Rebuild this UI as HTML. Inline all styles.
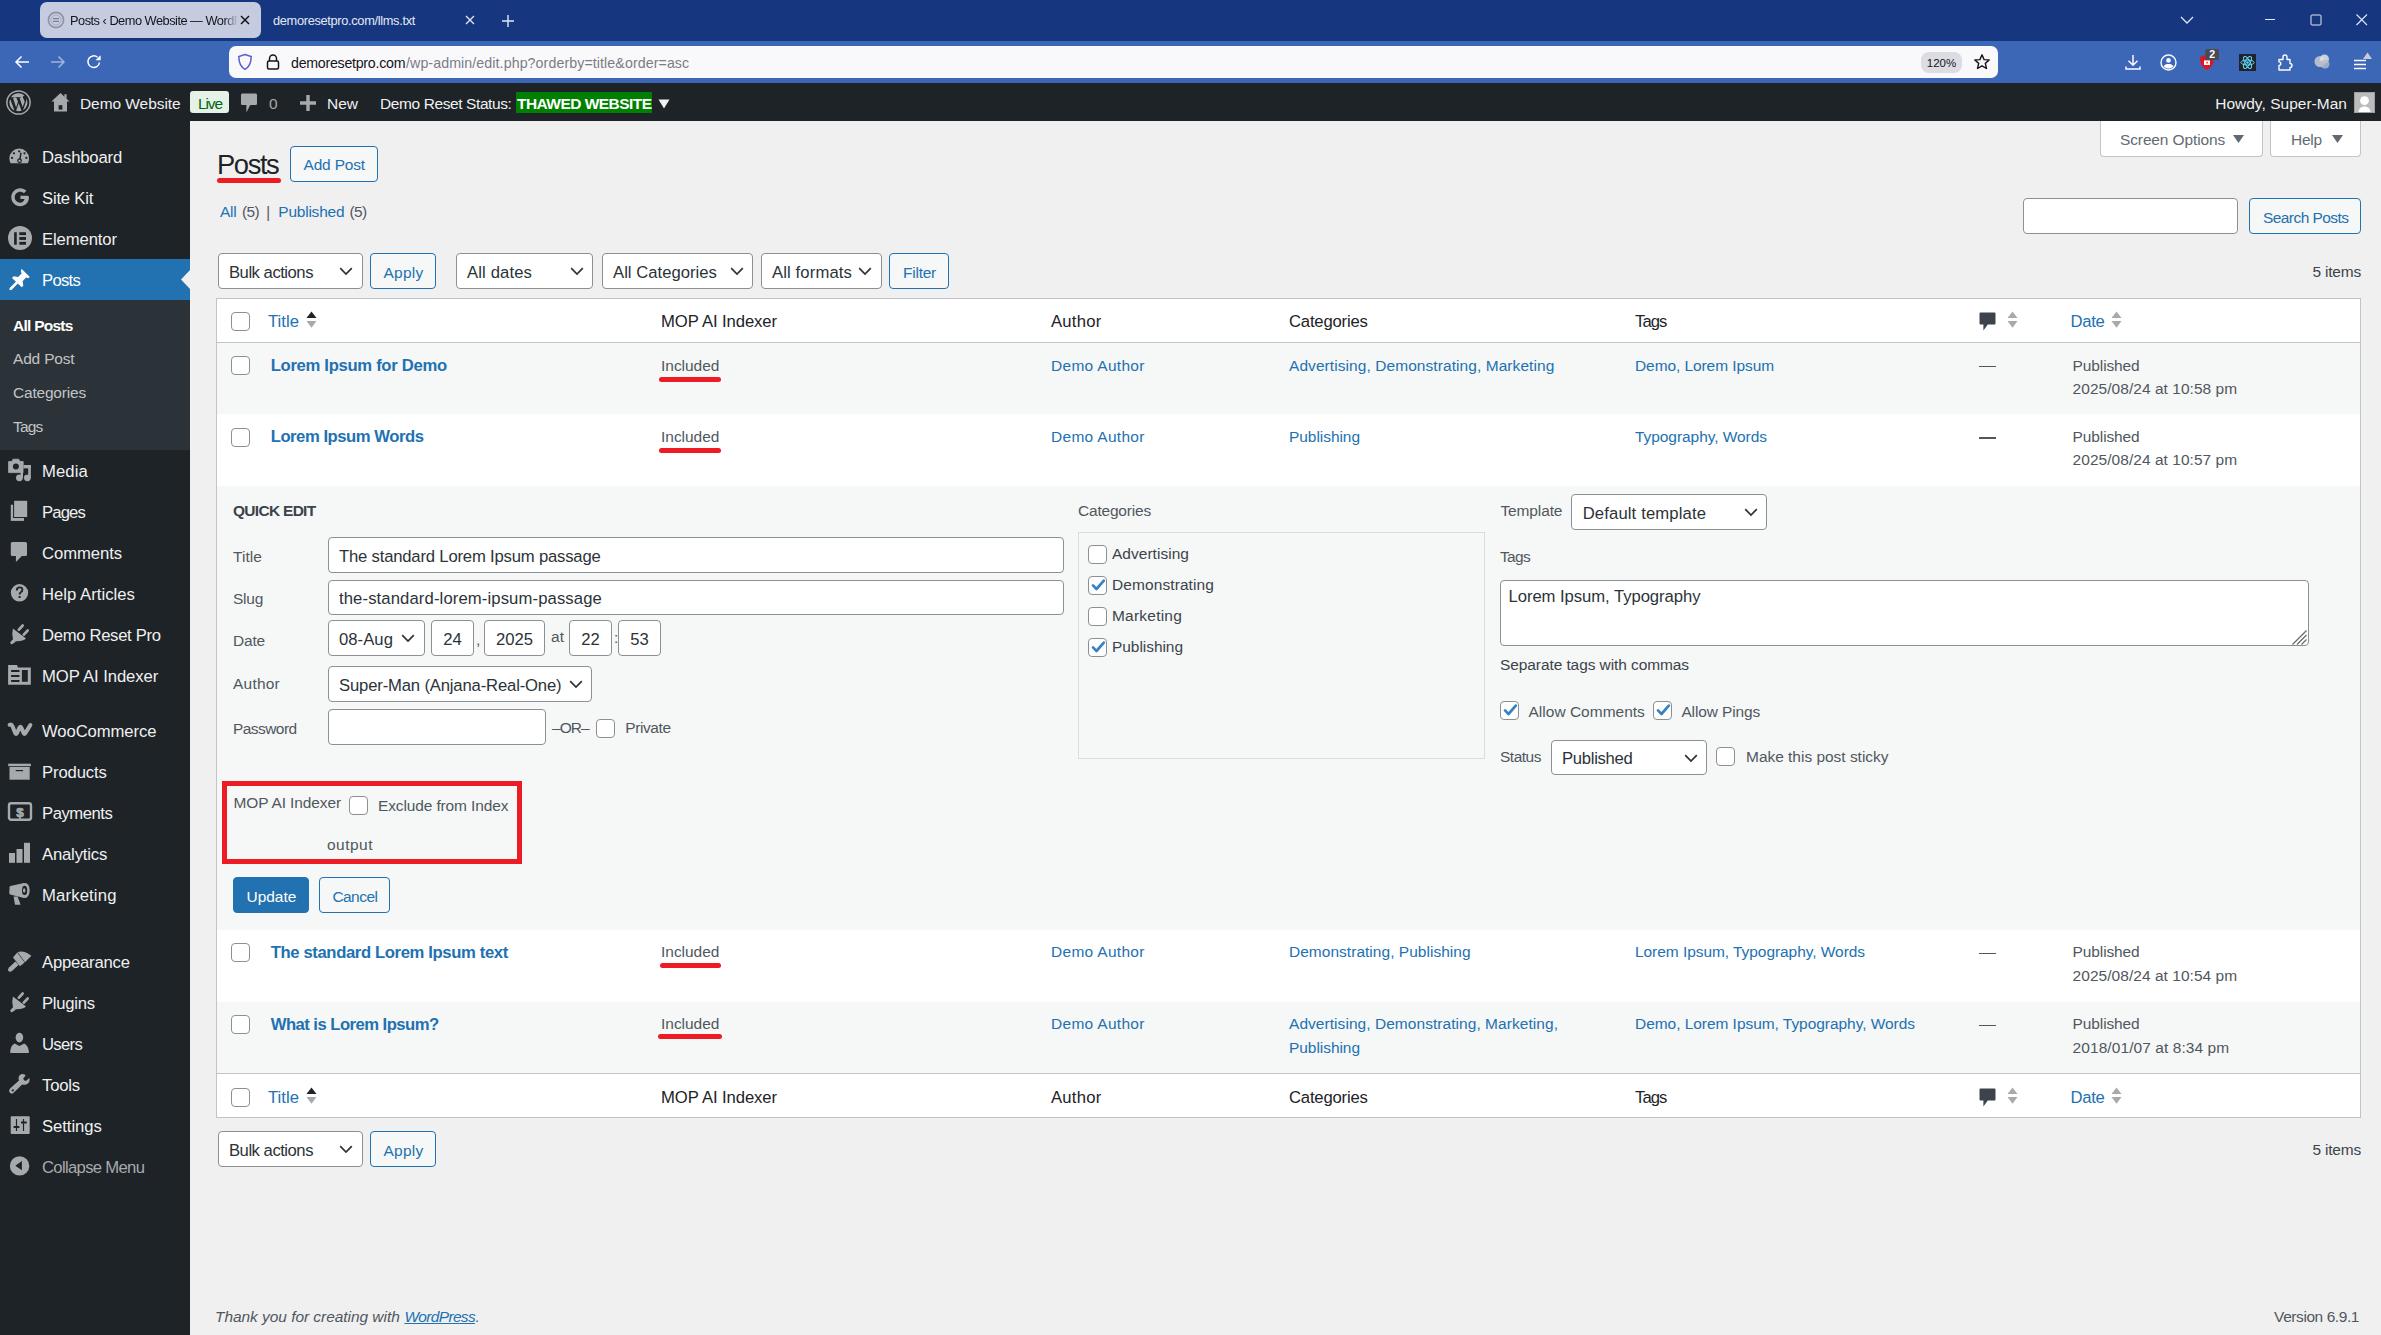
<!DOCTYPE html>
<html><head><meta charset="utf-8"><style>
html,body{margin:0;padding:0;width:2381px;height:1335px;overflow:hidden;background:#f0f0f1;}
body{position:relative;font-family:"Liberation Sans",sans-serif;}
.a{position:absolute;}
.t{position:absolute;white-space:nowrap;}
</style></head><body>
<div class="a" style="left:0px;top:0px;width:2381px;height:41px;background:#16377f"></div>
<div class="a" style="left:0px;top:41px;width:2381px;height:42px;background:#3c67b7"></div>
<div class="a" style="left:40px;top:2px;width:221px;height:36px;background:#c5cce0;border-radius:7px"></div>
<svg class="a" style="left:47px;top:11px;" width="18" height="18" viewBox="0 0 18 18"><circle cx="9" cy="9" r="7.6" fill="none" stroke="#8d93a6" stroke-width="1.6"/><circle cx="9" cy="9" r="5" fill="none" stroke="#a8adbd" stroke-width="1"/><path d="M6 7.6h6M6 10.4h6" stroke="#7a8094" stroke-width="1.4"/></svg>
<div class="t" style="top:12.50px;font-size:12.8px;line-height:16px;color:#15141a;letter-spacing:-0.500px;left:70px;width:168px;overflow:hidden;-webkit-mask-image:linear-gradient(90deg,#000 154px,transparent 168px);">Posts ‹ Demo Website — WordPress</div>
<svg class="a" style="left:240px;top:15px;" width="10" height="10" viewBox="0 0 10 10"><path d="M1 1L9 9M9 1L1 9" stroke="#15141a" stroke-width="1.5"/></svg>
<div class="t" style="top:12.50px;font-size:12.8px;line-height:16px;color:#e3e8f4;letter-spacing:-0.324px;left:273px;">demoresetpro.com/llms.txt</div>
<svg class="a" style="left:465px;top:15px;" width="10" height="10" viewBox="0 0 10 10"><path d="M1 1L9 9M9 1L1 9" stroke="#e3e8f4" stroke-width="1.3"/></svg>
<svg class="a" style="left:501px;top:14px;" width="14" height="14" viewBox="0 0 14 14"><path d="M7 1V13M1 7H13" stroke="#e3e8f4" stroke-width="1.4"/></svg>
<svg class="a" style="left:2180px;top:15px;" width="14" height="10" viewBox="0 0 14 10"><path d="M1 2L7 8L13 2" fill="none" stroke="#e3e8f4" stroke-width="1.3"/></svg>
<svg class="a" style="left:2265px;top:19px;" width="10" height="2" viewBox="0 0 10 2"><path d="M0 .5H10" stroke="#e3e8f4" stroke-width="1"/></svg>
<svg class="a" style="left:2310px;top:14px;" width="12" height="12" viewBox="0 0 12 12"><rect x="1" y="1" width="10" height="10" rx="1" fill="none" stroke="#e3e8f4" stroke-width="1"/></svg>
<svg class="a" style="left:2356px;top:14px;" width="12" height="12" viewBox="0 0 12 12"><path d="M0.5 0.5L11 11M11 0.5L0.5 11" stroke="#e3e8f4" stroke-width="1.1"/></svg>
<svg class="a" style="left:14px;top:55px;" width="16" height="14" viewBox="0 0 16 14"><path d="M15 7H2M7.5 1.5L2 7L7.5 12.5" fill="none" stroke="#fff" stroke-width="1.5"/></svg>
<svg class="a" style="left:50px;top:55px;" width="16" height="14" viewBox="0 0 16 14"><path d="M1 7H14M8.5 1.5L14 7L8.5 12.5" fill="none" stroke="#9fb6e0" stroke-width="1.5"/></svg>
<svg class="a" style="left:86px;top:54px;" width="16" height="16" viewBox="0 0 16 16"><path d="M13.5 8.5A5.8 5.8 0 1 1 11.6 3.3" fill="none" stroke="#fff" stroke-width="1.5"/><path d="M14.6 1.2V6.3H9.5Z" fill="#fff"/></svg>
<div class="a" style="left:229px;top:46px;width:1769px;height:32px;background:#f9f9fb;border-radius:7px"></div>
<svg class="a" style="left:237px;top:53px;" width="16" height="18" viewBox="0 0 16 18"><path d="M8 1.5L14.2 3.6C14.2 10 12 14.2 8 16.4C4 14.2 1.8 10 1.8 3.6Z" fill="none" stroke="#5b5bd6" stroke-width="1.5"/></svg>
<svg class="a" style="left:266px;top:53px;" width="14" height="18" viewBox="0 0 14 18"><path d="M3.5 8V5.5a3.5 3.5 0 0 1 7 0V8" fill="none" stroke="#15141a" stroke-width="1.5"/><rect x="1.5" y="8" width="11" height="8" rx="1.5" fill="none" stroke="#15141a" stroke-width="1.5"/></svg>
<div class="t" style="top:54.00px;font-size:14.2px;line-height:18px;color:#15141a;letter-spacing:-0.255px;left:291px;">demoresetpro.com</div>
<div class="t" style="top:54.00px;font-size:14.2px;line-height:18px;color:#7c7c85;letter-spacing:0.097px;left:406px;">/wp-admin/edit.php?orderby=title&amp;order=asc</div>
<div class="a" style="left:1921px;top:52px;width:41px;height:21px;background:#dcdde3;border-radius:8px"></div>
<div class="t" style="top:55.50px;font-size:11.5px;line-height:15px;color:#15141a;left:1926.79px;">120%</div>
<svg class="a" style="left:1973px;top:53px;" width="18" height="18" viewBox="0 0 18 18"><path d="M9 1.8L11.1 6.6L16.2 7L12.3 10.4L13.5 15.5L9 12.8L4.5 15.5L5.7 10.4L1.8 7L6.9 6.6Z" fill="none" stroke="#15141a" stroke-width="1.4" stroke-linejoin="round"/></svg>
<svg class="a" style="left:2124px;top:53px;" width="18" height="18" viewBox="0 0 18 18"><path d="M9 2V12M4.5 7.8L9 12.3L13.5 7.8M2 13.5V16H16V13.5" fill="none" stroke="#fbfbfe" stroke-width="1.5"/></svg>
<svg class="a" style="left:2160px;top:54px;" width="17" height="17" viewBox="0 0 17 17"><circle cx="8.5" cy="8.5" r="7.5" fill="none" stroke="#fbfbfe" stroke-width="1.4"/><circle cx="8.5" cy="6.4" r="2.3" fill="#fbfbfe"/><path d="M3.6 12.2C4.6 10.6 6.2 10 8.5 10S12.4 10.6 13.4 12.2C12.2 13.8 10.4 14.6 8.5 14.6S4.8 13.8 3.6 12.2Z" fill="#fbfbfe"/></svg>
<svg class="a" style="left:2198px;top:48px;" width="24" height="24" viewBox="0 0 24 24"><path d="M9 6.8L16 9C16 16.4 13.4 19.8 9 21.8C4.6 19.8 2 16.4 2 9Z" fill="#e0141e"/><rect x="6" y="12.4" width="6" height="4.6" fill="#fff"/><rect x="8.4" y="13.8" width="1.4" height="1.6" fill="#e0141e"/><rect x="7.4" y="1" width="13.6" height="11" rx="1.6" fill="#4a4a52"/><text x="14.2" y="10.2" font-family="Liberation Sans" font-size="10.5" font-weight="bold" fill="#fff" text-anchor="middle">2</text></svg>
<svg class="a" style="left:2239px;top:54px;" width="17" height="17" viewBox="0 0 17 17"><rect x="0" y="0" width="17" height="17" fill="#20232a"/><ellipse cx="8.5" cy="8.5" rx="6.6" ry="2.5" fill="none" stroke="#61dafb" stroke-width="1"/><ellipse cx="8.5" cy="8.5" rx="6.6" ry="2.5" fill="none" stroke="#61dafb" stroke-width="1" transform="rotate(60 8.5 8.5)"/><ellipse cx="8.5" cy="8.5" rx="6.6" ry="2.5" fill="none" stroke="#61dafb" stroke-width="1" transform="rotate(-60 8.5 8.5)"/><circle cx="8.5" cy="8.5" r="1.3" fill="#61dafb"/></svg>
<svg class="a" style="left:2277px;top:53px;" width="17" height="18" viewBox="0 0 17 18"><path d="M2 6.5H6V4a2 2 0 0 1 4 0V6.5H13V10.5a2 2 0 0 1 0 4V17H2V12.5a1.8 1.8 0 0 0 0-3.6Z" fill="none" stroke="#fbfbfe" stroke-width="1.4" stroke-linejoin="round"/></svg>
<svg class="a" style="left:2313px;top:53px;" width="19" height="17" viewBox="0 0 19 17"><circle cx="7" cy="8.5" r="5.5" fill="#c9cbd2" opacity=".85"/><circle cx="11.5" cy="6" r="4.5" fill="#e2e3e8" opacity=".85"/><circle cx="12" cy="11" r="4.5" fill="#b9bbc4" opacity=".8"/></svg>
<svg class="a" style="left:2351px;top:51px;" width="22" height="20" viewBox="0 0 22 20"><path d="M3 9.5H15M3 13.5H15M3 17.5H15" stroke="#fbfbfe" stroke-width="1.4"/><path d="M16.5 1.5L21 8H12Z" fill="#c9cbd2"/></svg>
<div class="a" style="left:0px;top:83px;width:2381px;height:38px;background:#1d2327"></div>
<svg class="a" style="left:6px;top:90px;" width="25" height="25" viewBox="0 0 25 25"><circle cx="12.5" cy="12.5" r="11.6" fill="none" stroke="#a7aaad" stroke-width="1.5"/><path d="M3.4 12.5A9.1 9.1 0 0 0 8.5 20.7L4.2 8.9A9 9 0 0 0 3.4 12.5ZM18.6 12A4.8 4.8 0 0 0 17.8 9.5C17.3 8.7 16.9 8 16.9 7.3 16.9 6.4 17.5 5.6 18.5 5.6H18.6A9.1 9.1 0 0 0 4.9 7.3H5.5C6.4 7.3 7.9 7.2 7.9 7.2 8.4 7.1 8.5 7.9 8 7.9 8 7.9 7.5 8 7 8L10.1 17.4 12 11.7 10.6 8C10.2 8 9.7 7.9 9.7 7.9 9.3 7.9 9.3 7.2 9.8 7.2 9.8 7.2 11.2 7.3 12.1 7.3 13 7.3 14.5 7.2 14.5 7.2 15 7.1 15 7.9 14.6 7.9 14.6 7.9 14.1 8 13.6 8L16.7 17.3 17.6 14.4C18 13.2 18.6 12.7 18.6 12ZM12.7 13.3L10.1 20.8A9 9 0 0 0 15.6 20.7L15.5 20.5ZM20.3 8.2A7.4 7.4 0 0 1 20.4 9.3C20.4 10.2 20.2 11.2 19.7 12.5L17 20.3A9.1 9.1 0 0 0 20.3 8.2Z" fill="#a7aaad"/></svg>
<svg class="a" style="left:51px;top:92px;" width="19" height="20" viewBox="0 0 19 20"><path d="M9.5 1L18.6 9.6H16V19.6H3V9.6H.4ZM13.4 2.2H15.6V6.4L13.4 4.4Z" fill="#a7aaad"/><rect x="7.6" y="13.2" width="3.8" height="4.4" fill="#1d2327"/></svg>
<div class="t" style="top:93.50px;font-size:15.47px;line-height:20px;color:#f0f0f1;letter-spacing:-0.048px;left:80px;">Demo Website</div>
<div class="a" style="left:190px;top:91px;width:39px;height:22px;background:#e6f2e8;border-radius:3px"></div>
<div class="t" style="top:93.50px;font-size:15.47px;line-height:20px;color:#00670c;letter-spacing:-1.095px;left:198px;">Live</div>
<svg class="a" style="left:240px;top:92px;" width="18" height="22" viewBox="0 0 18 22"><path d="M2.6 1.4H15.4C16.4 1.4 17 2 17 3V11.4C17 12.4 16.4 13 15.4 13H10.2L6.4 20.6V13H2.6C1.6 13 1 12.4 1 11.4V3C1 2 1.6 1.4 2.6 1.4Z" fill="#a7aaad"/></svg>
<div class="t" style="top:93.50px;font-size:15.47px;line-height:20px;color:#a7aaad;left:269px;">0</div>
<svg class="a" style="left:300px;top:95px;" width="16" height="16" viewBox="0 0 16 16"><path d="M8 0V16M0 8H16" stroke="#a7aaad" stroke-width="3.4"/></svg>
<div class="t" style="top:93.50px;font-size:15.47px;line-height:20px;color:#f0f0f1;letter-spacing:0.017px;left:327px;">New</div>
<div class="t" style="top:93.50px;font-size:15.47px;line-height:20px;color:#f0f0f1;letter-spacing:-0.385px;left:380px;">Demo Reset Status:</div>
<div class="a" style="left:516px;top:92px;width:136px;height:21px;background:#008000"></div>
<div class="t" style="top:93.50px;font-size:15.47px;line-height:20px;color:#fff;font-weight:bold;letter-spacing:-0.522px;left:517px;">THAWED WEBSITE</div>
<svg class="a" style="left:658px;top:99px;" width="12" height="10" viewBox="0 0 12 10"><path d="M0.5 0.5H11.5L6 9.5Z" fill="#f0f0f1"/></svg>
<div class="t" style="top:93.50px;font-size:15.47px;line-height:20px;color:#f0f0f1;letter-spacing:0.033px;left:2215.20px;">Howdy, Super-Man</div>
<div class="a" style="left:2354px;top:92px;width:21px;height:21px;background:#bcbcbc;border:1px solid #a0a0a0;box-sizing:border-box"></div>
<svg class="a" style="left:2355px;top:93px;" width="19" height="19" viewBox="0 0 19 19"><circle cx="9.5" cy="7.6" r="4.4" fill="#fff"/><path d="M3.6 19C3.6 15.6 6 13.4 9.5 13.4S15.4 15.6 15.4 19Z" fill="#fff"/></svg>
<div class="a" style="left:0px;top:121px;width:190px;height:1214px;background:#1d2327"></div>
<div class="a" style="left:0px;top:259px;width:190px;height:41px;background:#2271b1"></div>
<svg class="a" style="left:181px;top:270px;" width="9" height="19" viewBox="0 0 9 19"><path d="M9 0V19L0 9.5Z" fill="#f0f0f1"/></svg>
<div class="a" style="left:0px;top:300px;width:190px;height:150px;background:#2c3338"></div>
<svg class="a" style="left:8.30px;top:144.80px;overflow:visible" width="22.40" height="22.40" viewBox="0 0 20 20"><path d="M10 3.2A8.8 8.8 0 0 0 1.2 12c0 1.5.4 3 1.1 4.3H17.7A8.7 8.7 0 0 0 18.8 12 8.8 8.8 0 0 0 10 3.2Z" fill="#a7aaad"/><circle cx="10" cy="5.6" r="1" fill="#1d2327"/><circle cx="5.3" cy="7.4" r="1" fill="#1d2327"/><circle cx="14.7" cy="7.4" r="1" fill="#1d2327"/><circle cx="3.6" cy="11.6" r="1" fill="#1d2327"/><circle cx="16.4" cy="11.6" r="1" fill="#1d2327"/><path d="M11.6 6.8L10.6 13" stroke="#1d2327" stroke-width="1.3"/><circle cx="10.3" cy="14" r="1.6" fill="none" stroke="#1d2327" stroke-width="1.1"/></svg>
<div class="t" style="top:147.00px;font-size:16.66px;line-height:21px;color:#f0f0f1;letter-spacing:-0.156px;left:42px;">Dashboard</div>
<svg class="a" style="left:9.00px;top:186.00px;overflow:visible" width="22.40" height="22.40" viewBox="0 0 20 20"><path d="M16.6 8.6H10.2V11.6H13.9C13.3 13.6 11.8 14.9 10 14.9 7.3 14.9 5.1 12.7 5.1 10S7.3 5.1 10 5.1C11.3 5.1 12.4 5.6 13.3 6.4L15.5 4.2C14 2.8 12.1 2 10 2 5.6 2 2 5.6 2 10S5.6 18 10 18C14.4 18 17.8 14.8 17.8 10 17.8 9.5 17.7 9 16.6 8.6Z" fill="#a7aaad"/></svg>
<div class="t" style="top:188.00px;font-size:16.66px;line-height:21px;color:#f0f0f1;letter-spacing:-0.198px;left:42px;">Site Kit</div>
<svg class="a" style="left:8.00px;top:225.80px;overflow:visible" width="24.00" height="24.00" viewBox="0 0 20 20"><circle cx="10" cy="10" r="10" fill="#a7aaad"/><rect x="5.1" y="5.2" width="2.2" height="10.4" fill="#1d2327"/><rect x="9.4" y="5.2" width="5.6" height="2.4" fill="#1d2327"/><rect x="9.4" y="9.2" width="5.6" height="2.4" fill="#1d2327"/><rect x="9.4" y="13.2" width="5.6" height="2.4" fill="#1d2327"/></svg>
<div class="t" style="top:229.00px;font-size:16.66px;line-height:21px;color:#f0f0f1;letter-spacing:-0.115px;left:42px;">Elementor</div>
<svg class="a" style="left:7.70px;top:266.70px;overflow:visible" width="23.60" height="23.60" viewBox="0 0 20 20"><path d="M11.5 1.5L18.5 8.5 17 9.6 15.3 9 12.4 12 13 15.8 11.6 17.2 8.3 13.9 3 19.4 1.2 19.6 1.4 17.8 6.7 12.6 3.4 9.3 4.8 7.9 8.6 8.5 11.5 5.5 10.9 3.6Z" fill="#fff"/></svg>
<div class="t" style="top:270.00px;font-size:16.66px;line-height:21px;color:#fff;letter-spacing:-0.693px;left:42px;">Posts</div>
<div class="t" style="top:461.00px;font-size:16.66px;line-height:21px;color:#f0f0f1;letter-spacing:0.085px;left:42px;">Media</div>
<div class="t" style="top:502.00px;font-size:16.66px;line-height:21px;color:#f0f0f1;letter-spacing:-0.848px;left:42px;">Pages</div>
<div class="t" style="top:543.00px;font-size:16.66px;line-height:21px;color:#f0f0f1;letter-spacing:-0.068px;left:42px;">Comments</div>
<div class="t" style="top:584.00px;font-size:16.66px;line-height:21px;color:#f0f0f1;letter-spacing:0.031px;left:42px;">Help Articles</div>
<div class="t" style="top:625.00px;font-size:16.66px;line-height:21px;color:#f0f0f1;letter-spacing:-0.318px;left:42px;">Demo Reset Pro</div>
<div class="t" style="top:666.00px;font-size:16.66px;line-height:21px;color:#f0f0f1;letter-spacing:-0.078px;left:42px;">MOP AI Indexer</div>
<div class="t" style="top:721.00px;font-size:16.66px;line-height:21px;color:#f0f0f1;letter-spacing:-0.093px;left:42px;">WooCommerce</div>
<div class="t" style="top:762.00px;font-size:16.66px;line-height:21px;color:#f0f0f1;letter-spacing:-0.118px;left:42px;">Products</div>
<div class="t" style="top:803.00px;font-size:16.66px;line-height:21px;color:#f0f0f1;letter-spacing:-0.460px;left:42px;">Payments</div>
<div class="t" style="top:844.00px;font-size:16.66px;line-height:21px;color:#f0f0f1;letter-spacing:-0.174px;left:42px;">Analytics</div>
<div class="t" style="top:885.00px;font-size:16.66px;line-height:21px;color:#f0f0f1;letter-spacing:0.161px;left:42px;">Marketing</div>
<div class="t" style="top:952.00px;font-size:16.66px;line-height:21px;color:#f0f0f1;letter-spacing:-0.215px;left:42px;">Appearance</div>
<div class="t" style="top:993.00px;font-size:16.66px;line-height:21px;color:#f0f0f1;letter-spacing:-0.249px;left:42px;">Plugins</div>
<div class="t" style="top:1034.00px;font-size:16.66px;line-height:21px;color:#f0f0f1;letter-spacing:-0.681px;left:42px;">Users</div>
<div class="t" style="top:1075.00px;font-size:16.66px;line-height:21px;color:#f0f0f1;letter-spacing:-0.199px;left:42px;">Tools</div>
<div class="t" style="top:1116.00px;font-size:16.66px;line-height:21px;color:#f0f0f1;letter-spacing:-0.062px;left:42px;">Settings</div>
<svg class="a" style="left:0;top:0" width="40" height="1200" viewBox="0 0 40 1200"><path d="M8.6 461.5H12L13 459.2H18.8L19.8 461.5H23.2V472.6H8.6Z" fill="#a7aaad" stroke="#a7aaad" stroke-width=".8" stroke-linejoin="round"/><circle cx="15.9" cy="466.4" r="3" fill="#1d2327"/><circle cx="19.4" cy="477.8" r="3.4" fill="#a7aaad"/><circle cx="27.4" cy="477.8" r="3.4" fill="#a7aaad"/><rect x="20.6" y="468" width="2.4" height="10" fill="#a7aaad"/><rect x="28.2" y="465" width="2.6" height="12.8" fill="#a7aaad"/><rect x="23.6" y="465" width="7.2" height="3.6" fill="#a7aaad"/><rect x="23.7" y="468.6" width="4.2" height="6" fill="#1d2327"/><rect x="10.8" y="504.7" width="13.2" height="16.2" fill="#a7aaad"/><rect x="13.1" y="499.8" width="15.1" height="18.2" fill="#1d2327"/><rect x="14.1" y="500.8" width="13.1" height="16.2" fill="#a7aaad"/><path d="M12.3 541.9H25.5Q27 541.9 27 543.4V554.5Q27 556 25.5 556H21.9L15.9 562V556H12.3Q10.8 556 10.8 554.5V543.4Q10.8 541.9 12.3 541.9Z" fill="#a7aaad"/><circle cx="19.5" cy="592.8" r="8.7" fill="#a7aaad"/><path d="M16.8 590.4Q16.8 587.4 19.6 587.4Q22.4 587.4 22.4 589.8Q22.4 591.4 20.8 592.2Q19.6 592.9 19.6 594.6" fill="none" stroke="#1d2327" stroke-width="1.9"/><rect x="18.6" y="596" width="2" height="2" fill="#1d2327"/><g transform="translate(0 0)"><path d="M12.9 628.4L26 638.6Q22.6 641.6 16 641.2L12.6 644Q10.6 644.6 10.2 642.8Q10.2 642 13 639.2Q11.6 633.4 12.9 628.4Z" fill="#a7aaad"/><path d="M18.9 629.6L22.6 625.6M23.8 634.6L27.6 630.6" stroke="#a7aaad" stroke-width="2.8" stroke-linecap="round"/></g><g transform="translate(0 368)"><path d="M12.9 628.4L26 638.6Q22.6 641.6 16 641.2L12.6 644Q10.6 644.6 10.2 642.8Q10.2 642 13 639.2Q11.6 633.4 12.9 628.4Z" fill="#a7aaad"/><path d="M18.9 629.6L22.6 625.6M23.8 634.6L27.6 630.6" stroke="#a7aaad" stroke-width="2.8" stroke-linecap="round"/></g><path d="M8.1 665H17L18 667.6H30.8V684.8H8.1Z" fill="#a7aaad"/><rect x="11.1" y="670" width="8.4" height="2" fill="#1d2327"/><rect x="11.1" y="675" width="8.4" height="2" fill="#1d2327"/><rect x="11.1" y="680" width="8.4" height="2" fill="#1d2327"/><rect x="21.9" y="670" width="5.9" height="11.8" fill="#1d2327"/><path d="M9.6 724.8Q11.6 724 12.6 726.4L15.4 733.4Q16 734.6 16.8 733.4L19.6 727.4Q20.4 726 21.2 727.4L23.8 733.4Q24.4 734.6 25.2 733.4L30.4 725" fill="none" stroke="#a7aaad" stroke-width="4" stroke-linecap="round" stroke-linejoin="round"/><rect x="8.2" y="763.7" width="22.7" height="2.5" fill="#a7aaad"/><rect x="9.5" y="767" width="20.2" height="12.7" fill="#a7aaad"/><rect x="15.7" y="770" width="7.4" height="1.2" fill="#1d2327"/><rect x="9" y="803.2" width="22" height="16.6" rx="2.2" fill="none" stroke="#a7aaad" stroke-width="2.4"/><text x="20" y="817.4" font-family="Liberation Sans" font-weight="bold" font-size="13.5" fill="#a7aaad" stroke="#a7aaad" stroke-width=".7" text-anchor="middle">$</text><rect x="9" y="853" width="6" height="9.8" fill="#a7aaad"/><rect x="16.5" y="849" width="6" height="13.8" fill="#a7aaad"/><rect x="24" y="842.8" width="6" height="20" fill="#a7aaad"/><path d="M9.6 888Q9 886.6 10.4 886L24 882.9V897.9L11 894.8Q9.4 894.4 9.2 893Z" fill="#a7aaad"/><ellipse cx="25.1" cy="890.4" rx="4.6" ry="7.5" fill="#a7aaad"/><ellipse cx="24.6" cy="890.4" rx="2.6" ry="4.6" fill="#1d2327"/><ellipse cx="24.2" cy="890.4" rx="1.2" ry="2.2" fill="#a7aaad"/><path d="M13.6 896.5H17.6L20.6 904.8H15Z" fill="#a7aaad"/><path d="M17.6 952Q24.2 950.2 31.4 955.8L25 962.2Z" fill="#a7aaad"/><path d="M13 957.4L17.2 952.6L24.6 962.6L20 966.2Z" fill="#a7aaad"/><path d="M15.4 961.4L18.8 964.8L12 971Q9.8 972.6 8.4 971Q7.2 969.4 9 967.4Z" fill="#a7aaad"/><ellipse cx="19.4" cy="1037.6" rx="3.8" ry="4.8" fill="#a7aaad"/><path d="M10.3 1053Q10 1045.6 14.6 1043.4L19.4 1046L24.2 1043.4Q28.8 1045.6 28.9 1053Z" fill="#a7aaad"/><path d="M24 1074.2Q19.4 1073.4 18.6 1077.6Q18.4 1079.2 19 1080.4L10 1088.6Q8.4 1090.4 9.6 1092.6Q11.6 1094.6 13.4 1093L22.2 1084.4Q23.6 1085 25.2 1084.8Q29.6 1084 29.6 1079.6Q29.6 1078.6 29.2 1078L26.4 1080.8L24.2 1080.6L23.2 1078.4L25.6 1075.4Q25 1074.4 24 1074.2Z" fill="#a7aaad"/><circle cx="12.8" cy="1090.4" r="1.1" fill="#1d2327"/><rect x="10.7" y="1116.2" width="19" height="17.7" rx="1" fill="#a7aaad"/><path d="M16.5 1119V1131M23.5 1119V1131" stroke="#1d2327" stroke-width="1.2"/><path d="M13.6 1127H19.4M21 1122.4H26.8" stroke="#1d2327" stroke-width="2"/><circle cx="19.6" cy="1165.9" r="9.7" fill="#a7aaad"/><path d="M15.3 1165.7L21.9 1161.1V1170.2Z" fill="#1d2327"/></svg>
<div class="t" style="top:1157.00px;font-size:16.66px;line-height:21px;color:#a7aaad;letter-spacing:-0.679px;left:42px;">Collapse Menu</div>
<div class="t" style="top:315.50px;font-size:15.47px;line-height:20px;color:#fff;font-weight:bold;letter-spacing:-0.733px;left:13px;">All Posts</div>
<div class="t" style="top:348.50px;font-size:15.47px;line-height:20px;color:#c3c4c7;letter-spacing:-0.173px;left:13px;">Add Post</div>
<div class="t" style="top:382.50px;font-size:15.47px;line-height:20px;color:#c3c4c7;letter-spacing:-0.181px;left:13px;">Categories</div>
<div class="t" style="top:416.50px;font-size:15.47px;line-height:20px;color:#c3c4c7;letter-spacing:-0.795px;left:13px;">Tags</div>
<div class="a" style="left:190px;top:121px;width:2191px;height:1214px;background:#f0f0f1"></div>
<div class="a" style="left:2100px;top:121px;width:163px;height:36px;background:#fff;border:1px solid #c3c4c7;border-top:none;border-radius:0 0 4px 4px;box-sizing:border-box"></div>
<div class="t" style="top:129.50px;font-size:15.47px;line-height:20px;color:#646970;letter-spacing:-0.109px;left:2120px;">Screen Options</div>
<svg class="a" style="left:2233px;top:135px;" width="11" height="8" viewBox="0 0 11 8"><path d="M0 0H11L5.5 8Z" fill="#646970"/></svg>
<div class="a" style="left:2270px;top:121px;width:91px;height:36px;background:#fff;border:1px solid #c3c4c7;border-top:none;border-radius:0 0 4px 4px;box-sizing:border-box"></div>
<div class="t" style="top:129.50px;font-size:15.47px;line-height:20px;color:#646970;letter-spacing:-0.204px;left:2291px;">Help</div>
<svg class="a" style="left:2332px;top:135px;" width="11" height="8" viewBox="0 0 11 8"><path d="M0 0H11L5.5 8Z" fill="#646970"/></svg>
<div class="t" style="top:147.00px;font-size:27.4px;line-height:35px;color:#1d2327;letter-spacing:-1.426px;left:217px;">Posts</div>
<div class="a" style="left:217px;top:178px;width:64px;height:5px;background:#ed1c24;border-radius:3px"></div>
<div class="a" style="left:290px;top:146px;width:88px;height:36px;background:#f6f7f7;border:1px solid #2271b1;border-radius:4px;box-sizing:border-box"></div>
<div class="t" style="top:154.50px;font-size:15.47px;line-height:20px;color:#2271b1;letter-spacing:-0.160px;left:303.5px;">Add Post</div>
<div class="t" style="top:201.50px;font-size:15.47px;line-height:20px;color:#2271b1;letter-spacing:-0.231px;left:220px;">All</div>
<div class="t" style="top:201.50px;font-size:15.47px;line-height:20px;color:#50575e;letter-spacing:-0.636px;left:242px;">(5)</div>
<div class="t" style="top:202.00px;font-size:16.66px;line-height:21px;color:#646970;left:266px;">|</div>
<div class="t" style="top:201.50px;font-size:15.47px;line-height:20px;color:#2271b1;letter-spacing:-0.216px;left:278.3px;">Published</div>
<div class="t" style="top:201.50px;font-size:15.47px;line-height:20px;color:#50575e;letter-spacing:-0.636px;left:349.5px;">(5)</div>
<div class="a" style="left:2023px;top:198px;width:215px;height:36px;background:#fff;border:1px solid #8c8f94;border-radius:4px;box-sizing:border-box"></div>
<div class="a" style="left:2249px;top:198px;width:112px;height:36px;background:#f6f7f7;border:1px solid #2271b1;border-radius:4px;box-sizing:border-box"></div>
<div class="t" style="top:207.50px;font-size:15.47px;line-height:20px;color:#2271b1;letter-spacing:-0.551px;left:2263px;">Search Posts</div>
<div class="a" style="left:218px;top:253px;width:145px;height:36px;background:#fff;border:1px solid #8c8f94;border-radius:4px;box-sizing:border-box"></div>
<div class="t" style="top:262.00px;font-size:16.66px;line-height:21px;color:#2c3338;letter-spacing:-0.486px;left:229px;">Bulk actions</div>
<svg class="a" style="left:339px;top:267.0px;" width="14" height="9" viewBox="0 0 14 9"><path d="M1.2 1.2L7 7L12.8 1.2" fill="none" stroke="#2c3338" stroke-width="1.7"/></svg>
<div class="a" style="left:370px;top:253px;width:66px;height:36px;background:#f6f7f7;border:1px solid #2271b1;border-radius:4px;box-sizing:border-box"></div>
<div class="t" style="top:262.50px;font-size:15.47px;line-height:20px;color:#2271b1;letter-spacing:0.260px;left:383.5px;">Apply</div>
<div class="a" style="left:456px;top:253px;width:137px;height:36px;background:#fff;border:1px solid #8c8f94;border-radius:4px;box-sizing:border-box"></div>
<div class="t" style="top:262.00px;font-size:16.66px;line-height:21px;color:#2c3338;letter-spacing:0.122px;left:467px;">All dates</div>
<svg class="a" style="left:570px;top:267.0px;" width="14" height="9" viewBox="0 0 14 9"><path d="M1.2 1.2L7 7L12.8 1.2" fill="none" stroke="#2c3338" stroke-width="1.7"/></svg>
<div class="a" style="left:602px;top:253px;width:151px;height:36px;background:#fff;border:1px solid #8c8f94;border-radius:4px;box-sizing:border-box"></div>
<div class="t" style="top:262.00px;font-size:16.66px;line-height:21px;color:#2c3338;letter-spacing:0.020px;left:613px;">All Categories</div>
<svg class="a" style="left:730px;top:267.0px;" width="14" height="9" viewBox="0 0 14 9"><path d="M1.2 1.2L7 7L12.8 1.2" fill="none" stroke="#2c3338" stroke-width="1.7"/></svg>
<div class="a" style="left:761px;top:253px;width:121px;height:36px;background:#fff;border:1px solid #8c8f94;border-radius:4px;box-sizing:border-box"></div>
<div class="t" style="top:262.00px;font-size:16.66px;line-height:21px;color:#2c3338;letter-spacing:0.119px;left:772px;">All formats</div>
<svg class="a" style="left:858px;top:267.0px;" width="14" height="9" viewBox="0 0 14 9"><path d="M1.2 1.2L7 7L12.8 1.2" fill="none" stroke="#2c3338" stroke-width="1.7"/></svg>
<div class="a" style="left:889px;top:253px;width:60px;height:36px;background:#f6f7f7;border:1px solid #2271b1;border-radius:4px;box-sizing:border-box"></div>
<div class="t" style="top:262.50px;font-size:15.47px;line-height:20px;color:#2271b1;letter-spacing:-0.230px;left:903px;">Filter</div>
<div class="t" style="top:261.50px;font-size:15.47px;line-height:20px;color:#3c434a;letter-spacing:-0.195px;left:2312.50px;">5 items</div>
<div class="a" style="left:216px;top:298px;width:2145px;height:820px;background:#fff;border:1px solid #c3c4c7;box-sizing:border-box"></div>
<div class="a" style="left:231px;top:312px;width:19px;height:19px;background:#fff;border:1px solid #8c8f94;border-radius:4px;box-sizing:border-box"></div>
<div class="t" style="top:311.00px;font-size:16.66px;line-height:21px;color:#2271b1;letter-spacing:0.029px;left:268px;">Title</div>
<svg class="a" style="left:305.5px;top:311px;" width="11" height="18" viewBox="0 0 11 18"><path d="M5.5 0.5L10.5 7H0.5Z" fill="#1d2327"/><path d="M0.5 10H10.5L5.5 16.8Z" fill="#a7aaad"/></svg>
<div class="t" style="top:311.00px;font-size:16.66px;line-height:21px;color:#1d2327;letter-spacing:-0.093px;left:661px;">MOP AI Indexer</div>
<div class="t" style="top:311.00px;font-size:16.66px;line-height:21px;color:#1d2327;letter-spacing:0.236px;left:1051px;">Author</div>
<div class="t" style="top:311.00px;font-size:16.66px;line-height:21px;color:#1d2327;letter-spacing:-0.187px;left:1289px;">Categories</div>
<div class="t" style="top:311.00px;font-size:16.66px;line-height:21px;color:#1d2327;letter-spacing:-0.923px;left:1635px;">Tags</div>
<svg class="a" style="left:1979px;top:312px;" width="17" height="20" viewBox="0 0 17 20"><path d="M1.8 0.5H15.2C16 .5 16.5 1 16.5 1.8V11.2C16.5 12 16 12.5 15.2 12.5H8.8L4.4 18.4V12.5H1.8C1 12.5 .5 12 .5 11.2V1.8C.5 1 1 .5 1.8 .5Z" fill="#3c434a"/></svg>
<svg class="a" style="left:2006.5px;top:311px;" width="11" height="18" viewBox="0 0 11 18"><path d="M5.5 0.5L10.5 7H0.5Z" fill="#a7aaad"/><path d="M0.5 10H10.5L5.5 16.8Z" fill="#a7aaad"/></svg>
<div class="t" style="top:311.00px;font-size:16.66px;line-height:21px;color:#2271b1;letter-spacing:-0.298px;left:2070.5px;">Date</div>
<svg class="a" style="left:2111px;top:311px;" width="11" height="18" viewBox="0 0 11 18"><path d="M5.5 0.5L10.5 7H0.5Z" fill="#a7aaad"/><path d="M0.5 10H10.5L5.5 16.8Z" fill="#a7aaad"/></svg>
<div class="a" style="left:217px;top:342px;width:2143px;height:1px;background:#c3c4c7"></div>
<div class="a" style="left:217px;top:343px;width:2143px;height:71px;background:#f6f7f7"></div>
<div class="a" style="left:231px;top:356px;width:19px;height:19px;background:#fff;border:1px solid #8c8f94;border-radius:4px;box-sizing:border-box"></div>
<div class="t" style="top:355.00px;font-size:16.66px;line-height:21px;color:#2271b1;font-weight:bold;letter-spacing:-0.313px;left:270.7px;">Lorem Ipsum for Demo</div>
<div class="t" style="top:355.50px;font-size:15.47px;line-height:20px;color:#50575e;letter-spacing:-0.011px;left:661px;">Included</div>
<div class="a" style="left:659px;top:377px;width:62px;height:5px;background:#ed1c24;border-radius:3px"></div>
<div class="t" style="top:355.50px;font-size:15.47px;line-height:20px;color:#2271b1;letter-spacing:0.310px;left:1051px;">Demo Author</div>
<div class="t" style="top:355.50px;font-size:15.47px;line-height:20px;color:#2271b1;letter-spacing:0.085px;left:1289px;">Advertising, Demonstrating, Marketing</div>
<div class="t" style="top:355.50px;font-size:15.47px;line-height:20px;color:#2271b1;letter-spacing:-0.067px;left:1635px;">Demo, Lorem Ipsum</div>
<div class="a" style="left:1979px;top:366px;width:17px;height:1.3999999999999773px;background:#50575e"></div>
<div class="t" style="top:355.50px;font-size:15.47px;line-height:20px;color:#50575e;letter-spacing:-0.105px;left:2072.6px;">Published</div>
<div class="t" style="top:379.00px;font-size:15.47px;line-height:20px;color:#50575e;letter-spacing:0.053px;left:2072.6px;">2025/08/24 at 10:58 pm</div>
<div class="a" style="left:217px;top:414px;width:2143px;height:72px;background:#fff"></div>
<div class="a" style="left:231px;top:428px;width:19px;height:19px;background:#fff;border:1px solid #8c8f94;border-radius:4px;box-sizing:border-box"></div>
<div class="t" style="top:426.30px;font-size:16.66px;line-height:21px;color:#2271b1;font-weight:bold;letter-spacing:-0.469px;left:270.7px;">Lorem Ipsum Words</div>
<div class="t" style="top:426.80px;font-size:15.47px;line-height:20px;color:#50575e;letter-spacing:-0.011px;left:661px;">Included</div>
<div class="a" style="left:659px;top:448.3px;width:62px;height:5.0px;background:#ed1c24;border-radius:3px"></div>
<div class="t" style="top:426.80px;font-size:15.47px;line-height:20px;color:#2271b1;letter-spacing:0.310px;left:1051px;">Demo Author</div>
<div class="t" style="top:426.80px;font-size:15.47px;line-height:20px;color:#2271b1;letter-spacing:-0.038px;left:1289px;">Publishing</div>
<div class="t" style="top:426.80px;font-size:15.47px;line-height:20px;color:#2271b1;letter-spacing:-0.042px;left:1635px;">Typography, Words</div>
<div class="a" style="left:1979px;top:437.3px;width:17px;height:1.3999999999999773px;background:#50575e"></div>
<div class="t" style="top:426.80px;font-size:15.47px;line-height:20px;color:#50575e;letter-spacing:-0.105px;left:2072.6px;">Published</div>
<div class="t" style="top:450.30px;font-size:15.47px;line-height:20px;color:#50575e;letter-spacing:0.053px;left:2072.6px;">2025/08/24 at 10:57 pm</div>
<div class="a" style="left:217px;top:486px;width:2143px;height:444px;background:#f6f7f7"></div>
<div class="t" style="top:500.50px;font-size:15.47px;line-height:20px;color:#3c434a;font-weight:bold;letter-spacing:-0.689px;left:233px;">QUICK EDIT</div>
<div class="t" style="top:546.50px;font-size:15.47px;line-height:20px;color:#50575e;letter-spacing:0.069px;left:233px;">Title</div>
<div class="a" style="left:328px;top:537px;width:736px;height:36px;background:#fff;border:1px solid #8c8f94;border-radius:4px;box-sizing:border-box"></div>
<div class="t" style="top:546.00px;font-size:16.66px;line-height:21px;color:#2c3338;letter-spacing:-0.189px;left:339px;">The standard Lorem Ipsum passage</div>
<div class="t" style="top:588.50px;font-size:15.47px;line-height:20px;color:#50575e;letter-spacing:-0.241px;left:233px;">Slug</div>
<div class="a" style="left:328px;top:580px;width:736px;height:35px;background:#fff;border:1px solid #8c8f94;border-radius:4px;box-sizing:border-box"></div>
<div class="t" style="top:588.00px;font-size:16.66px;line-height:21px;color:#2c3338;letter-spacing:0.116px;left:339px;">the-standard-lorem-ipsum-passage</div>
<div class="t" style="top:630.50px;font-size:15.47px;line-height:20px;color:#50575e;letter-spacing:-0.170px;left:233px;">Date</div>
<div class="a" style="left:328px;top:620px;width:97px;height:36px;background:#fff;border:1px solid #8c8f94;border-radius:4px;box-sizing:border-box"></div>
<div class="t" style="top:629.00px;font-size:16.66px;line-height:21px;color:#2c3338;letter-spacing:0.046px;left:339px;">08-Aug</div>
<svg class="a" style="left:401px;top:634.0px;" width="14" height="9" viewBox="0 0 14 9"><path d="M1.2 1.2L7 7L12.8 1.2" fill="none" stroke="#2c3338" stroke-width="1.7"/></svg>
<div class="a" style="left:431px;top:620px;width:43px;height:36px;background:#fff;border:1px solid #8c8f94;border-radius:4px;box-sizing:border-box"></div>
<div class="t" style="top:629.00px;font-size:16.66px;line-height:21px;color:#2c3338;left:443.23px;">24</div>
<div class="t" style="top:629.50px;font-size:15.47px;line-height:20px;color:#50575e;left:476px;">,</div>
<div class="a" style="left:484px;top:620px;width:61px;height:36px;background:#fff;border:1px solid #8c8f94;border-radius:4px;box-sizing:border-box"></div>
<div class="t" style="top:629.00px;font-size:16.66px;line-height:21px;color:#2c3338;left:495.97px;">2025</div>
<div class="t" style="top:626.50px;font-size:15.47px;line-height:20px;color:#50575e;letter-spacing:0.049px;left:551px;">at</div>
<div class="a" style="left:569px;top:620px;width:43px;height:36px;background:#fff;border:1px solid #8c8f94;border-radius:4px;box-sizing:border-box"></div>
<div class="t" style="top:629.00px;font-size:16.66px;line-height:21px;color:#2c3338;left:581.23px;">22</div>
<div class="t" style="top:627.50px;font-size:15.47px;line-height:20px;color:#50575e;left:614px;">:</div>
<div class="a" style="left:618px;top:620px;width:43px;height:36px;background:#fff;border:1px solid #8c8f94;border-radius:4px;box-sizing:border-box"></div>
<div class="t" style="top:629.00px;font-size:16.66px;line-height:21px;color:#2c3338;left:630.23px;">53</div>
<div class="t" style="top:673.50px;font-size:15.47px;line-height:20px;color:#50575e;letter-spacing:0.237px;left:233px;">Author</div>
<div class="a" style="left:328px;top:666px;width:264px;height:36px;background:#fff;border:1px solid #8c8f94;border-radius:4px;box-sizing:border-box"></div>
<div class="t" style="top:675.00px;font-size:16.66px;line-height:21px;color:#2c3338;letter-spacing:-0.162px;left:339px;">Super-Man (Anjana-Real-One)</div>
<svg class="a" style="left:569px;top:680.0px;" width="14" height="9" viewBox="0 0 14 9"><path d="M1.2 1.2L7 7L12.8 1.2" fill="none" stroke="#2c3338" stroke-width="1.7"/></svg>
<div class="t" style="top:718.50px;font-size:15.47px;line-height:20px;color:#50575e;letter-spacing:-0.541px;left:233px;">Password</div>
<div class="a" style="left:328px;top:709px;width:218px;height:36px;background:#fff;border:1px solid #8c8f94;border-radius:4px;box-sizing:border-box"></div>
<div class="t" style="top:717.50px;font-size:15.47px;line-height:20px;color:#50575e;letter-spacing:-0.903px;left:552px;">–OR–</div>
<div class="a" style="left:596px;top:719px;width:19px;height:19px;background:#fff;border:1px solid #8c8f94;border-radius:4px;box-sizing:border-box"></div>
<div class="t" style="top:717.50px;font-size:15.47px;line-height:20px;color:#50575e;letter-spacing:-0.364px;left:625.2px;">Private</div>
<div class="a" style="left:222px;top:781px;width:300px;height:83px;border:5px solid #ed1c24;box-sizing:border-box"></div>
<div class="t" style="top:792.50px;font-size:15.47px;line-height:20px;color:#50575e;letter-spacing:-0.101px;left:233.5px;">MOP AI Indexer</div>
<div class="a" style="left:349px;top:796px;width:19px;height:19px;background:#fff;border:1px solid #8c8f94;border-radius:4px;box-sizing:border-box"></div>
<div class="t" style="top:795.50px;font-size:15.47px;line-height:20px;color:#50575e;letter-spacing:-0.118px;left:378px;">Exclude from Index</div>
<div class="t" style="top:834.50px;font-size:15.47px;line-height:20px;color:#50575e;letter-spacing:0.498px;left:327px;">output</div>
<div class="a" style="left:233px;top:877px;width:76px;height:36px;background:#2271b1;border:1px solid #2271b1;border-radius:4px;box-sizing:border-box"></div>
<div class="t" style="top:886.50px;font-size:15.47px;line-height:20px;color:#fff;letter-spacing:-0.048px;left:246.6px;">Update</div>
<div class="a" style="left:319px;top:877px;width:71px;height:36px;background:#f6f7f7;border:1px solid #2271b1;border-radius:4px;box-sizing:border-box"></div>
<div class="t" style="top:886.50px;font-size:15.47px;line-height:20px;color:#2271b1;letter-spacing:-0.526px;left:332.4px;">Cancel</div>
<div class="t" style="top:500.50px;font-size:15.47px;line-height:20px;color:#50575e;letter-spacing:-0.181px;left:1078px;">Categories</div>
<div class="a" style="left:1078px;top:532px;width:407px;height:227px;border:1px solid #dcdcde;box-sizing:border-box"></div>
<div class="a" style="left:1088px;top:545px;width:19px;height:19px;background:#fff;border:1px solid #8c8f94;border-radius:4px;box-sizing:border-box"></div>
<div class="t" style="top:543.50px;font-size:15.47px;line-height:20px;color:#3c434a;letter-spacing:0.043px;left:1112px;">Advertising</div>
<div class="a" style="left:1088px;top:576px;width:19px;height:19px;background:#fff;border:1px solid #8c8f94;border-radius:4px;box-sizing:border-box"></div>
<svg class="a" style="left:1088px;top:576px;" width="19" height="19" viewBox="0 0 19 19"><path d="M5 9.4L8.5 13L15.8 4.6" fill="none" stroke="#3582c4" stroke-width="2.7" stroke-linecap="round" stroke-linejoin="round"/></svg>
<div class="t" style="top:574.50px;font-size:15.47px;line-height:20px;color:#3c434a;letter-spacing:0.107px;left:1112px;">Demonstrating</div>
<div class="a" style="left:1088px;top:607px;width:19px;height:19px;background:#fff;border:1px solid #8c8f94;border-radius:4px;box-sizing:border-box"></div>
<div class="t" style="top:605.50px;font-size:15.47px;line-height:20px;color:#3c434a;letter-spacing:0.231px;left:1112px;">Marketing</div>
<div class="a" style="left:1088px;top:638px;width:19px;height:19px;background:#fff;border:1px solid #8c8f94;border-radius:4px;box-sizing:border-box"></div>
<svg class="a" style="left:1088px;top:638px;" width="19" height="19" viewBox="0 0 19 19"><path d="M5 9.4L8.5 13L15.8 4.6" fill="none" stroke="#3582c4" stroke-width="2.7" stroke-linecap="round" stroke-linejoin="round"/></svg>
<div class="t" style="top:636.50px;font-size:15.47px;line-height:20px;color:#3c434a;letter-spacing:-0.038px;left:1112px;">Publishing</div>
<div class="t" style="top:500.50px;font-size:15.47px;line-height:20px;color:#50575e;letter-spacing:-0.097px;left:1500.4px;">Template</div>
<div class="a" style="left:1571px;top:494px;width:196px;height:36px;background:#fff;border:1px solid #8c8f94;border-radius:4px;box-sizing:border-box"></div>
<div class="t" style="top:503.00px;font-size:16.66px;line-height:21px;color:#2c3338;letter-spacing:0.130px;left:1582.7px;">Default template</div>
<svg class="a" style="left:1744px;top:508.0px;" width="14" height="9" viewBox="0 0 14 9"><path d="M1.2 1.2L7 7L12.8 1.2" fill="none" stroke="#2c3338" stroke-width="1.7"/></svg>
<div class="t" style="top:546.50px;font-size:15.47px;line-height:20px;color:#50575e;letter-spacing:-0.670px;left:1500px;">Tags</div>
<div class="a" style="left:1500px;top:580px;width:809px;height:66px;background:#fff;border:1px solid #8c8f94;border-radius:4px;box-sizing:border-box"></div>
<div class="t" style="top:586.00px;font-size:16.66px;line-height:21px;color:#2c3338;letter-spacing:-0.054px;left:1508.5px;">Lorem Ipsum, Typography</div>
<svg class="a" style="left:2290px;top:628px;" width="18" height="18" viewBox="0 0 18 18"><path d="M16.5 2.5L2.5 16.5M16.5 7L7 16.5M16.5 11.5L11.5 16.5" stroke="#646970" stroke-width="1.2"/></svg>
<div class="t" style="top:654.50px;font-size:15.47px;line-height:20px;color:#3c434a;letter-spacing:-0.076px;left:1500px;">Separate tags with commas</div>
<div class="a" style="left:1500px;top:701px;width:19px;height:19px;background:#fff;border:1px solid #8c8f94;border-radius:4px;box-sizing:border-box"></div>
<svg class="a" style="left:1500px;top:701px;" width="19" height="19" viewBox="0 0 19 19"><path d="M5 9.4L8.5 13L15.8 4.6" fill="none" stroke="#3582c4" stroke-width="2.7" stroke-linecap="round" stroke-linejoin="round"/></svg>
<div class="t" style="top:701.50px;font-size:15.47px;line-height:20px;color:#50575e;letter-spacing:0.024px;left:1528.5px;">Allow Comments</div>
<div class="a" style="left:1653px;top:701px;width:19px;height:19px;background:#fff;border:1px solid #8c8f94;border-radius:4px;box-sizing:border-box"></div>
<svg class="a" style="left:1653px;top:701px;" width="19" height="19" viewBox="0 0 19 19"><path d="M5 9.4L8.5 13L15.8 4.6" fill="none" stroke="#3582c4" stroke-width="2.7" stroke-linecap="round" stroke-linejoin="round"/></svg>
<div class="t" style="top:701.50px;font-size:15.47px;line-height:20px;color:#50575e;letter-spacing:-0.106px;left:1681.4px;">Allow Pings</div>
<div class="t" style="top:746.50px;font-size:15.47px;line-height:20px;color:#50575e;letter-spacing:-0.476px;left:1500px;">Status</div>
<div class="a" style="left:1551px;top:740px;width:156px;height:35px;background:#fff;border:1px solid #8c8f94;border-radius:4px;box-sizing:border-box"></div>
<div class="t" style="top:748.00px;font-size:16.66px;line-height:21px;color:#2c3338;letter-spacing:-0.297px;left:1562px;">Published</div>
<svg class="a" style="left:1684px;top:753.5px;" width="14" height="9" viewBox="0 0 14 9"><path d="M1.2 1.2L7 7L12.8 1.2" fill="none" stroke="#2c3338" stroke-width="1.7"/></svg>
<div class="a" style="left:1716px;top:746.5px;width:19px;height:19.0px;background:#fff;border:1px solid #8c8f94;border-radius:4px;box-sizing:border-box"></div>
<div class="t" style="top:746.50px;font-size:15.47px;line-height:20px;color:#50575e;letter-spacing:-0.010px;left:1746px;">Make this post sticky</div>
<div class="a" style="left:217px;top:930px;width:2143px;height:72px;background:#fff"></div>
<div class="a" style="left:231px;top:943px;width:19px;height:19px;background:#fff;border:1px solid #8c8f94;border-radius:4px;box-sizing:border-box"></div>
<div class="t" style="top:941.50px;font-size:16.66px;line-height:21px;color:#2271b1;font-weight:bold;letter-spacing:-0.376px;left:270.7px;">The standard Lorem Ipsum text</div>
<div class="t" style="top:942.00px;font-size:15.47px;line-height:20px;color:#50575e;letter-spacing:-0.011px;left:661px;">Included</div>
<div class="a" style="left:660px;top:962.5px;width:61px;height:5.0px;background:#ed1c24;border-radius:3px"></div>
<div class="t" style="top:942.00px;font-size:15.47px;line-height:20px;color:#2271b1;letter-spacing:0.310px;left:1051px;">Demo Author</div>
<div class="t" style="top:942.00px;font-size:15.47px;line-height:20px;color:#2271b1;letter-spacing:0.041px;left:1289px;">Demonstrating, Publishing</div>
<div class="t" style="top:942.00px;font-size:15.47px;line-height:20px;color:#2271b1;letter-spacing:-0.043px;left:1635px;">Lorem Ipsum, Typography, Words</div>
<div class="a" style="left:1979px;top:952.5px;width:17px;height:1.3999999999999773px;background:#50575e"></div>
<div class="t" style="top:942.00px;font-size:15.47px;line-height:20px;color:#50575e;letter-spacing:-0.105px;left:2072.6px;">Published</div>
<div class="t" style="top:965.50px;font-size:15.47px;line-height:20px;color:#50575e;letter-spacing:0.053px;left:2072.6px;">2025/08/24 at 10:54 pm</div>
<div class="a" style="left:217px;top:1002px;width:2143px;height:71px;background:#f6f7f7"></div>
<div class="a" style="left:231px;top:1015px;width:19px;height:19px;background:#fff;border:1px solid #8c8f94;border-radius:4px;box-sizing:border-box"></div>
<div class="t" style="top:1013.50px;font-size:16.66px;line-height:21px;color:#2271b1;font-weight:bold;letter-spacing:-0.533px;left:270.7px;">What is Lorem Ipsum?</div>
<div class="t" style="top:1014.00px;font-size:15.47px;line-height:20px;color:#50575e;letter-spacing:-0.011px;left:661px;">Included</div>
<div class="a" style="left:658px;top:1034.0px;width:64px;height:5.0px;background:#ed1c24;border-radius:3px"></div>
<div class="t" style="top:1014.00px;font-size:15.47px;line-height:20px;color:#2271b1;letter-spacing:0.310px;left:1051px;">Demo Author</div>
<div class="t" style="top:1014.00px;font-size:15.47px;line-height:20px;color:#2271b1;letter-spacing:0.065px;left:1289px;">Advertising, Demonstrating, Marketing,</div>
<div class="t" style="top:1037.50px;font-size:15.47px;line-height:20px;color:#2271b1;letter-spacing:-0.038px;left:1289px;">Publishing</div>
<div class="t" style="top:1014.00px;font-size:15.47px;line-height:20px;color:#2271b1;letter-spacing:-0.032px;left:1635px;">Demo, Lorem Ipsum, Typography, Words</div>
<div class="a" style="left:1979px;top:1024.5px;width:17px;height:1.400000000000091px;background:#50575e"></div>
<div class="t" style="top:1014.00px;font-size:15.47px;line-height:20px;color:#50575e;letter-spacing:-0.105px;left:2072.6px;">Published</div>
<div class="t" style="top:1037.50px;font-size:15.47px;line-height:20px;color:#50575e;letter-spacing:0.089px;left:2072.6px;">2018/01/07 at 8:34 pm</div>
<div class="a" style="left:217px;top:1073px;width:2143px;height:1px;background:#c3c4c7"></div>
<div class="a" style="left:231px;top:1088px;width:19px;height:19px;background:#fff;border:1px solid #8c8f94;border-radius:4px;box-sizing:border-box"></div>
<div class="t" style="top:1087.00px;font-size:16.66px;line-height:21px;color:#2271b1;letter-spacing:0.029px;left:268px;">Title</div>
<svg class="a" style="left:305.5px;top:1087px;" width="11" height="18" viewBox="0 0 11 18"><path d="M5.5 0.5L10.5 7H0.5Z" fill="#1d2327"/><path d="M0.5 10H10.5L5.5 16.8Z" fill="#a7aaad"/></svg>
<div class="t" style="top:1087.00px;font-size:16.66px;line-height:21px;color:#1d2327;letter-spacing:-0.093px;left:661px;">MOP AI Indexer</div>
<div class="t" style="top:1087.00px;font-size:16.66px;line-height:21px;color:#1d2327;letter-spacing:0.236px;left:1051px;">Author</div>
<div class="t" style="top:1087.00px;font-size:16.66px;line-height:21px;color:#1d2327;letter-spacing:-0.187px;left:1289px;">Categories</div>
<div class="t" style="top:1087.00px;font-size:16.66px;line-height:21px;color:#1d2327;letter-spacing:-0.923px;left:1635px;">Tags</div>
<svg class="a" style="left:1979px;top:1088px;" width="17" height="20" viewBox="0 0 17 20"><path d="M1.8 0.5H15.2C16 .5 16.5 1 16.5 1.8V11.2C16.5 12 16 12.5 15.2 12.5H8.8L4.4 18.4V12.5H1.8C1 12.5 .5 12 .5 11.2V1.8C.5 1 1 .5 1.8 .5Z" fill="#3c434a"/></svg>
<svg class="a" style="left:2006.5px;top:1087px;" width="11" height="18" viewBox="0 0 11 18"><path d="M5.5 0.5L10.5 7H0.5Z" fill="#a7aaad"/><path d="M0.5 10H10.5L5.5 16.8Z" fill="#a7aaad"/></svg>
<div class="t" style="top:1087.00px;font-size:16.66px;line-height:21px;color:#2271b1;letter-spacing:-0.298px;left:2070.5px;">Date</div>
<svg class="a" style="left:2111px;top:1087px;" width="11" height="18" viewBox="0 0 11 18"><path d="M5.5 0.5L10.5 7H0.5Z" fill="#a7aaad"/><path d="M0.5 10H10.5L5.5 16.8Z" fill="#a7aaad"/></svg>
<div class="a" style="left:218px;top:1131px;width:145px;height:36px;background:#fff;border:1px solid #8c8f94;border-radius:4px;box-sizing:border-box"></div>
<div class="t" style="top:1140.00px;font-size:16.66px;line-height:21px;color:#2c3338;letter-spacing:-0.486px;left:229px;">Bulk actions</div>
<svg class="a" style="left:339px;top:1145.0px;" width="14" height="9" viewBox="0 0 14 9"><path d="M1.2 1.2L7 7L12.8 1.2" fill="none" stroke="#2c3338" stroke-width="1.7"/></svg>
<div class="a" style="left:370px;top:1131px;width:66px;height:36px;background:#f6f7f7;border:1px solid #2271b1;border-radius:4px;box-sizing:border-box"></div>
<div class="t" style="top:1140.50px;font-size:15.47px;line-height:20px;color:#2271b1;letter-spacing:0.260px;left:383.5px;">Apply</div>
<div class="t" style="top:1139.50px;font-size:15.47px;line-height:20px;color:#3c434a;letter-spacing:-0.195px;left:2312.50px;">5 items</div>
<div class="t" style="top:1306.50px;font-size:15.47px;line-height:20px;color:#50575e;font-style:italic;letter-spacing:-0.037px;left:215px;">Thank you for creating with </div>
<div class="t" style="top:1306.50px;font-size:15.47px;line-height:20px;color:#2271b1;font-style:italic;letter-spacing:-0.656px;left:404.4px;text-decoration:underline;">WordPress</div>
<div class="t" style="top:1306.50px;font-size:15.47px;line-height:20px;color:#50575e;font-style:italic;left:475.5px;">.</div>
<div class="t" style="top:1306.50px;font-size:15.47px;line-height:20px;color:#50575e;letter-spacing:-0.416px;left:2274.10px;">Version 6.9.1</div>
</body></html>
